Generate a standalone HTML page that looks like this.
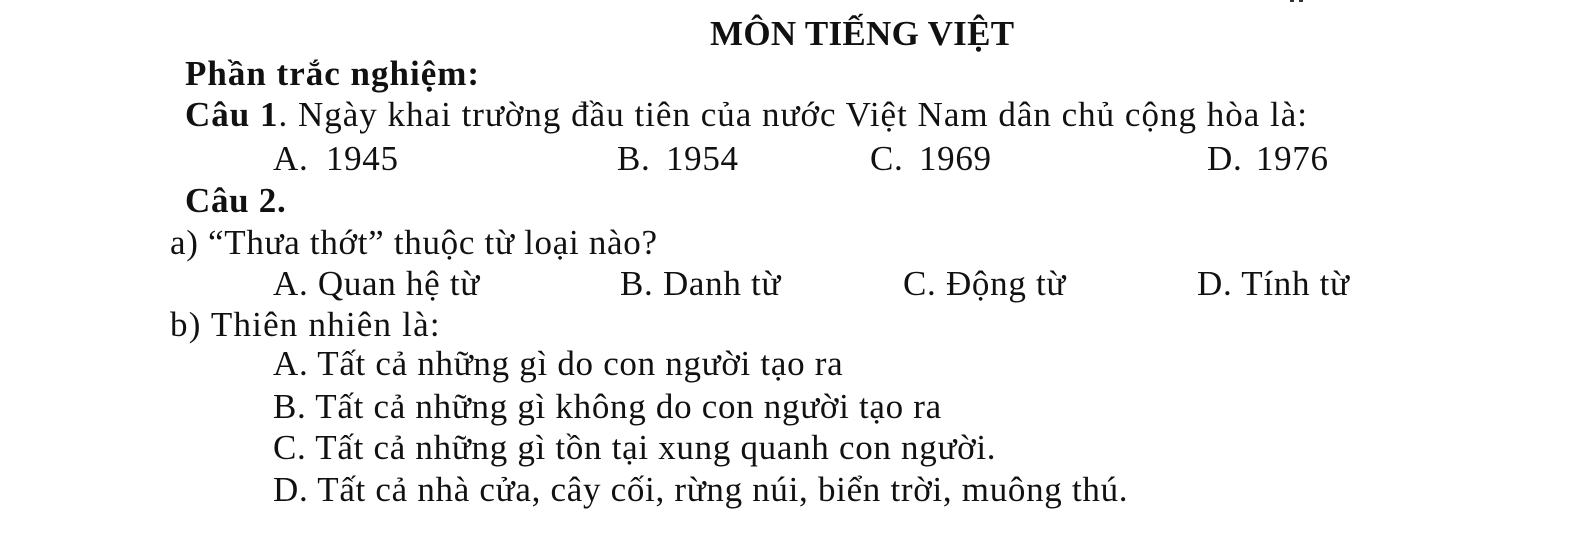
<!DOCTYPE html>
<html><head><meta charset="utf-8"><style>
body{margin:0;width:1582px;height:545px;background:#fff;position:relative;overflow:hidden;font-family:"Liberation Serif",serif;font-size:35px;color:#111;letter-spacing:0.7px}
div{position:absolute;white-space:nowrap;line-height:34px;}
b{font-weight:bold}
</style></head><body>
<div style="left:1290px;top:-4px;width:4px;height:6px;background:#333"></div>
<div style="left:1299px;top:-4px;width:4px;height:6px;background:#333"></div>
<div style="left:710px;top:17px;letter-spacing:0.3px"><b>MÔN TIẾNG VIỆT</b></div>
<div style="left:185px;top:57px;letter-spacing:1px"><b>Phần trắc nghiệm:</b></div>
<div style="left:185px;top:98px;letter-spacing:1px"><b>Câu 1</b>. Ngày khai trường đầu tiên của nước Việt Nam dân chủ cộng hòa là:</div>
<div style="left:273px;top:142px;word-spacing:8px">A. 1945</div>
<div style="left:617px;top:142px;word-spacing:6px">B. 1954</div>
<div style="left:870px;top:142px;word-spacing:6px">C. 1969</div>
<div style="left:1207px;top:142px;word-spacing:4px">D. 1976</div>
<div style="left:185px;top:184px"><b>Câu 2.</b></div>
<div style="left:170px;top:226px">a) “Thưa thớt” thuộc từ loại nào?</div>
<div style="left:273px;top:267px">A. Quan hệ từ</div>
<div style="left:620px;top:267px">B. Danh từ</div>
<div style="left:903px;top:267px">C. Động từ</div>
<div style="left:1197px;top:267px">D. Tính từ</div>
<div style="left:170px;top:308px;letter-spacing:1.2px">b) Thiên nhiên là:</div>
<div style="left:273px;top:347px">A. Tất cả những gì do con người tạo ra</div>
<div style="left:273px;top:390px">B. Tất cả những gì không do con người tạo ra</div>
<div style="left:273px;top:431px">C. Tất cả những gì tồn tại xung quanh con người.</div>
<div style="left:273px;top:473px">D. Tất cả nhà cửa, cây cối, rừng núi, biển trời, muông thú.</div>
</body></html>
